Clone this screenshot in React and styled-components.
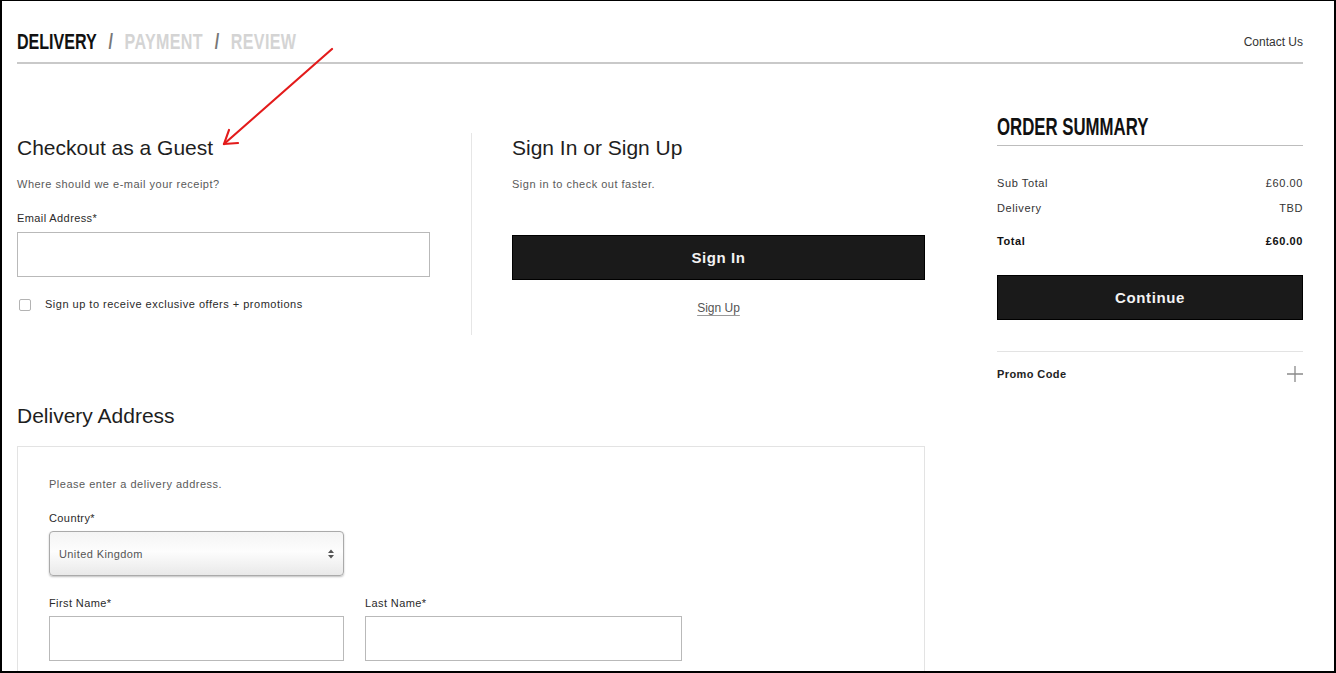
import React from 'react'
import styled, { createGlobalStyle } from 'styled-components'

const Global = createGlobalStyle`
	html, body {
		margin: 0;
		padding: 0;
		background: #fff;
	}
	body {
		font-family: "Liberation Sans", Arial, sans-serif;
		color: #222;
	}
	* { box-sizing: border-box; }
`

const Frame = styled.div`
	position: relative;
	width: 1336px;
	height: 673px;
	overflow: hidden;
	border-style: solid;
	border-color: #000;
	border-width: 1px 2px 2px 2px;
	padding: 0 31px 0 15px;
`

const Header = styled.header`
	display: flex;
	justify-content: space-between;
	align-items: center;
	padding: 30px 0 9px;
	border-bottom: 2px solid #c9c9c9;
`

const Condensed = styled.div`
	display: inline-block;
	font-weight: 700;
	font-size: ${p => p.size || 22}px;
	line-height: ${p => p.size || 22}px;
	transform: scaleX(0.73);
	transform-origin: left center;
	white-space: nowrap;
	color: #111;
`

const Step = styled.span`
	color: ${p => (p.active ? '#111' : '#d4d4d4')};
	letter-spacing: ${p => (p.active ? 0 : 0.5)}px;
`

const Slash = styled.span`
	color: #777;
	margin: 0 16px;
`

const Contact = styled.a`
	font-size: 12px;
	line-height: 14px;
	color: #333;
	text-decoration: none;
`

const Main = styled.main`
	display: grid;
	grid-template-columns: 908px 306px;
	column-gap: 72px;
	padding-top: 52px;
`

const Checkout = styled.div`
	padding-top: 17px;
`

const TopRow = styled.div`
	display: grid;
	grid-template-columns: 413px 82px 413px;
	height: 202px;
`

const Divider = styled.div`
	justify-self: center;
	width: 1px;
	background: #e6e6e6;
`

const Column = styled.div`
	display: flex;
	flex-direction: column;
	padding-top: 3px;
`

const Title = styled.h2`
	margin: 0;
	font-size: 21px;
	line-height: 24px;
	font-weight: 400;
	color: #1e1e1e;
`

const Note = styled.p`
	margin: ${p => p.gap ?? 17}px 0 0;
	font-size: 11px;
	line-height: 14px;
	letter-spacing: 0.5px;
	color: #5a5a5a;
`

const Label = styled.label`
	display: block;
	margin-top: ${p => p.gap ?? 20}px;
	font-size: 11px;
	line-height: 14px;
	letter-spacing: 0.4px;
	color: #2a2a2a;
`

const TextInput = styled.input`
	display: block;
	width: ${p => p.w || 413}px;
	height: 45px;
	margin-top: ${p => p.gap ?? 7}px;
	border: 1px solid #b9b9b9;
	background: #fff;
	outline: none;
`

const CheckRow = styled.div`
	display: flex;
	align-items: center;
	margin-top: 20px;
	font-size: 11px;
	line-height: 14px;
	letter-spacing: 0.5px;
	color: #2a2a2a;
`

const Box = styled.span`
	width: 12px;
	height: 12px;
	margin: 2px 14px 0 2px;
	border: 1px solid #b3b3b3;
	border-radius: 2px;
	background: #fff;
`

const DarkButton = styled.button`
	display: block;
	width: 100%;
	height: 45px;
	margin-top: ${p => p.gap || 0}px;
	border: 1px solid #000;
	background: #1a1a1a;
	color: #f2f2f2;
	font-family: "Liberation Sans", Arial, sans-serif;
	font-weight: 700;
	font-size: 15px;
	letter-spacing: 0.6px;
	cursor: pointer;
`

const SignUp = styled.a`
	align-self: center;
	margin-top: 21px;
	font-size: 12px;
	line-height: 15px;
	color: #555;
	text-decoration: underline;
	text-decoration-color: #999;
	text-underline-offset: 3px;
`

const SectionTitle = styled(Title)`
	margin-top: 69px;
`

const AddressBox = styled.div`
	margin-top: 18px;
	border: 1px solid #e3e3e3;
	padding: 30px 31px 40px;
`

const SelectBox = styled.div`
	display: flex;
	align-items: center;
	width: 295px;
	height: 45px;
	margin-top: 6px;
	padding: 0 9px;
	border: 1px solid #aaa;
	border-radius: 4px;
	background: linear-gradient(#f4f4f4, #fdfdfd 45%, #e9e9e9);
	box-shadow: 0 1px 2px rgba(0, 0, 0, 0.25);
	font-size: 11px;
	letter-spacing: 0.4px;
	color: #555;
`

const Arrows = styled.svg`
	margin-left: auto;
`

const NameRow = styled.div`
	display: grid;
	grid-template-columns: 295px 317px;
	column-gap: 21px;
`

const Summary = styled.aside`
	display: flex;
	flex-direction: column;
`

const SummaryHead = styled.div`
	padding-bottom: 6px;
	border-bottom: 1px solid #bdbdbd;
`

const Line = styled.div`
	display: flex;
	justify-content: space-between;
	margin-top: ${p => p.gap}px;
	font-size: 11px;
	line-height: 14px;
	letter-spacing: 0.6px;
	font-weight: ${p => (p.bold ? 700 : 400)};
	color: ${p => (p.bold ? '#111' : '#333')};
`

const Promo = styled.div`
	display: flex;
	justify-content: space-between;
	align-items: center;
	margin-top: 31px;
	padding-top: 14px;
	border-top: 1px solid #e3e3e3;
	font-size: 11px;
	line-height: 14px;
	letter-spacing: 0.4px;
	font-weight: 700;
	color: #222;
`

const Annotation = styled.svg`
	position: absolute;
	left: 0;
	top: 0;
	pointer-events: none;
`

export default function App() {
	return (
		<>
			<Global />
			<Frame>
				<Header>
					<Condensed>
						<Step active>DELIVERY</Step>
						<Slash>/</Slash>
						<Step>PAYMENT</Step>
						<Slash>/</Slash>
						<Step>REVIEW</Step>
					</Condensed>
					<Contact href="#">Contact Us</Contact>
				</Header>

				<Main>
					<Checkout>
						<TopRow>
							<Column>
								<Title>Checkout as a Guest</Title>
								<Note>Where should we e-mail your receipt?</Note>
								<Label>Email Address*</Label>
								<TextInput type="email" />
								<CheckRow>
									<Box />
									Sign up to receive exclusive offers + promotions
								</CheckRow>
							</Column>
							<Divider />
							<Column>
								<Title>Sign In or Sign Up</Title>
								<Note>Sign in to check out faster.</Note>
								<DarkButton gap={44}>Sign In</DarkButton>
								<SignUp href="#">Sign Up</SignUp>
							</Column>
						</TopRow>

						<SectionTitle>Delivery Address</SectionTitle>
						<AddressBox>
							<Note gap={0}>Please enter a delivery address.</Note>
							<Label>Country*</Label>
							<SelectBox>
								United Kingdom
								<Arrows width="6" height="10" viewBox="0 0 6 10">
									<path d="M0 4 L3 0.5 L6 4 Z M0 6 L3 9.5 L6 6 Z" fill="#555" />
								</Arrows>
							</SelectBox>
							<NameRow>
								<div>
									<Label>First Name*</Label>
									<TextInput w={295} gap={6} />
								</div>
								<div>
									<Label>Last Name*</Label>
									<TextInput w={317} gap={6} />
								</div>
							</NameRow>
						</AddressBox>
					</Checkout>

					<Summary>
						<SummaryHead>
							<Condensed size={23}>ORDER SUMMARY</Condensed>
						</SummaryHead>
						<Line gap={30}><span>Sub Total</span><span>£60.00</span></Line>
						<Line gap={11}><span>Delivery</span><span>TBD</span></Line>
						<Line gap={19} bold><span>Total</span><span>£60.00</span></Line>
						<DarkButton gap={27}>Continue</DarkButton>
						<Promo>
							<span>Promo Code</span>
							<svg width="16" height="16" viewBox="0 0 16 16">
								<path d="M8 0 V16 M0 8 H16" stroke="#8a8a8a" strokeWidth="1.3" />
							</svg>
						</Promo>
					</Summary>
				</Main>

				<Annotation width="1336" height="673">
					<g stroke="#e31b1b" strokeWidth="2.2" fill="none" strokeLinecap="round">
						<path d="M330 48 L222 143" />
						<path d="M222 143 L236 142" />
						<path d="M222 143 L227 129" />
					</g>
				</Annotation>
			</Frame>
		</>
	)
}
